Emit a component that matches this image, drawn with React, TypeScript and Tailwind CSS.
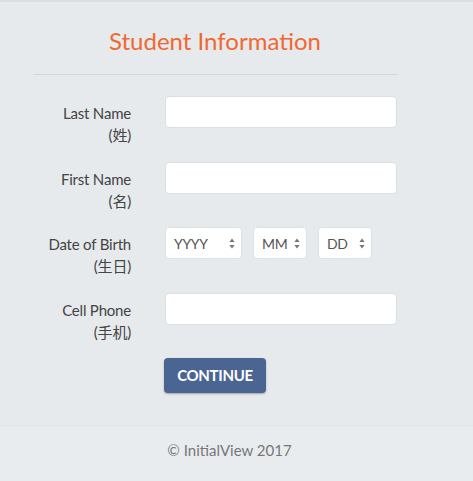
import React from "react";

const font = { fontFamily: 'Lato, "Noto Sans CJK SC", sans-serif' };

function Arrows() {
  return (
    <svg width="6" height="11" viewBox="0 0 6 11" className="shrink-0">
      <path d="M3 0.5 L5.6 4 H0.4 Z" fill="#777" />
      <path d="M3 10.5 L5.6 7 H0.4 Z" fill="#777" />
    </svg>
  );
}

function Select({ label, width }: { label: string; width: string }) {
  return (
    <div
      className={`${width} h-8 flex items-center justify-between pl-2 pr-[6px] bg-white rounded border border-[#dfe2e5] text-[14px] tracking-[-0.3px] text-[#555]`}
    >
      <span>{label}</span>
      <Arrows />
    </div>
  );
}

function Row({ en, zh, children }: { en: string; zh: string; children: React.ReactNode }) {
  return (
    <div className="flex h-[65.5px]">
      <div className="w-[98px] pt-[6px] text-right text-[15px] leading-[22px] text-[#444] tracking-[-0.2px]">
        <div>{en}</div>
        <div>({zh})</div>
      </div>
      <div className="ml-[34px] w-[232px]">{children}</div>
    </div>
  );
}

function TextInput() {
  return <div className="h-8 w-full bg-white rounded border border-[#dcdfe3]" />;
}

export default function App() {
  return (
    <div className="min-h-[481px] w-[473px] bg-[#e7eaed] flex flex-col" style={font}>
      <div className="h-[2px] bg-[#dadee2]" />
      <div className="px-[33px] w-[430px]">
        <h1 className="mt-[24px] text-center text-[24px] leading-[30px] text-[#f0682f]">
          Student Information
        </h1>
        <div className="mt-[18px] h-px bg-[#d3d6da]" />
        <div className="mt-[21px]">
          <Row en="Last Name" zh="姓">
            <TextInput />
          </Row>
          <Row en="First Name" zh="名">
            <TextInput />
          </Row>
          <Row en="Date of Birth" zh="生日">
            <div className="flex gap-[11px]">
              <Select label="YYYY" width="w-[77px]" />
              <Select label="MM" width="w-[54px]" />
              <Select label="DD" width="w-[54px]" />
            </div>
          </Row>
          <Row en="Cell Phone" zh="手机">
            <TextInput />
          </Row>
          <div className="pl-[131px]">
            <button className="h-[35px] w-[102px] rounded-sm bg-[#4b6593] text-white text-[15px] font-bold tracking-[-0.3px] shadow-[0_1px_2px_rgba(0,0,0,0.3)]">
              CONTINUE
            </button>
          </div>
        </div>
      </div>
      <footer className="mt-[32px] flex-1 bg-[#e9ecef] border-t border-[#e3e6e9] flex items-start justify-center pt-[14px] pr-[14px] text-[15px] leading-[20px] text-[#777]">
        © InitialView 2017
      </footer>
    </div>
  );
}
